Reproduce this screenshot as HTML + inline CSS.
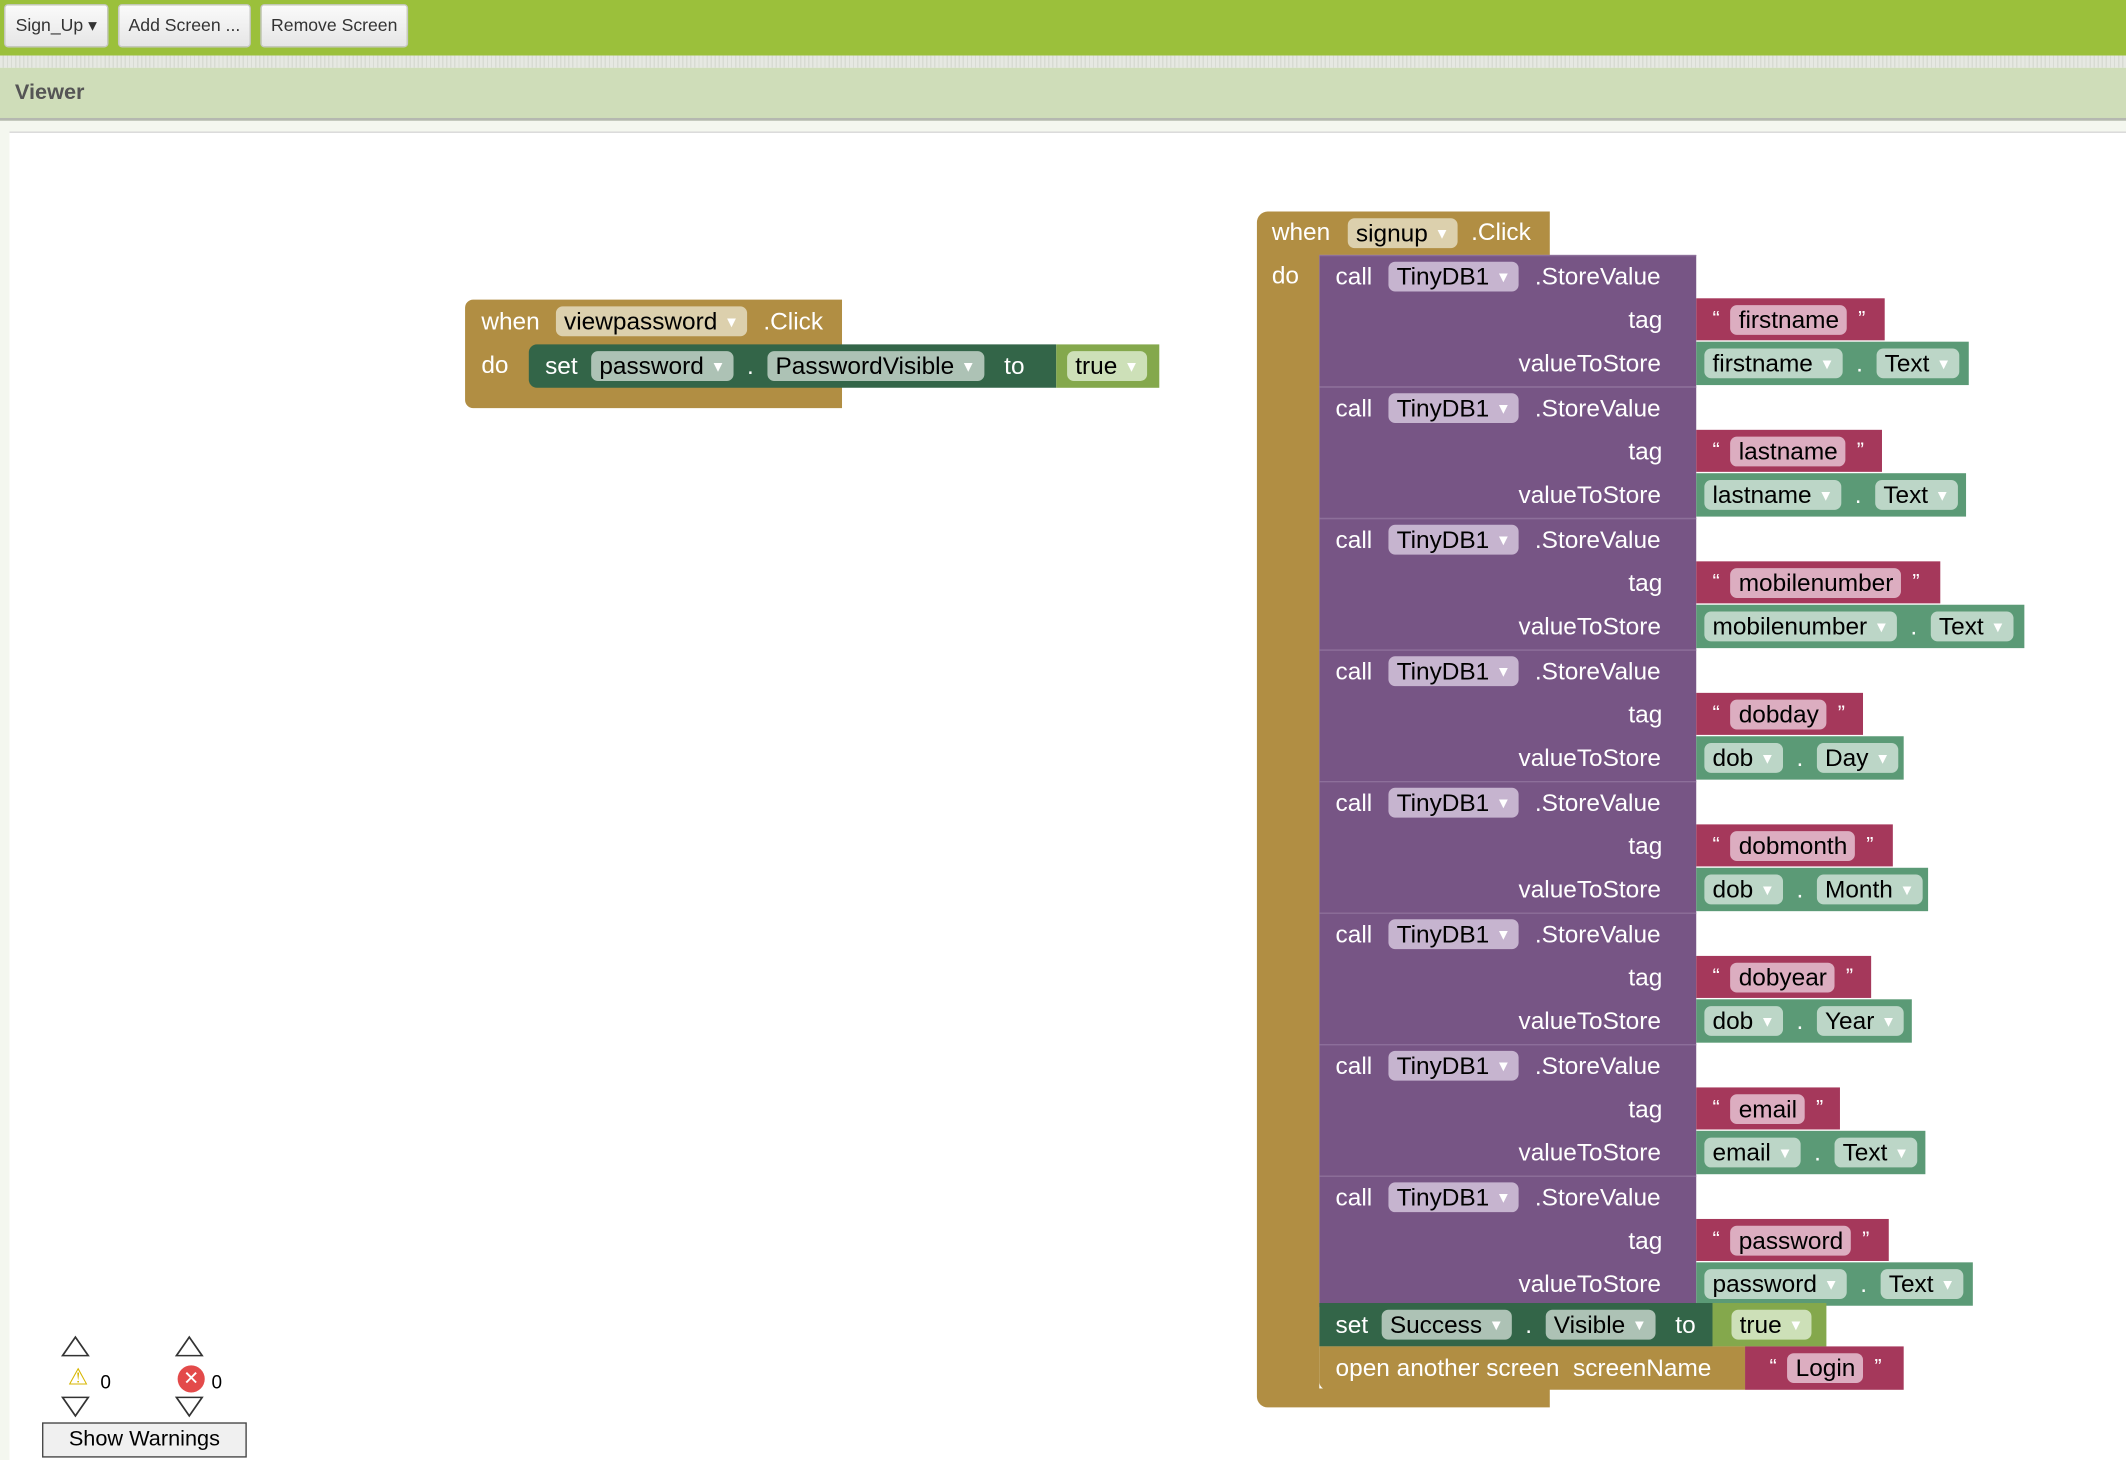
<!DOCTYPE html>
<html><head><meta charset="utf-8">
<style>
html,body{margin:0;padding:0;width:2126px;height:1460px;overflow:hidden;background:#fff;font-family:"Liberation Sans",sans-serif}
#s{position:absolute;left:0;top:0;width:1568px;height:1077px;transform:scale(1.3559);transform-origin:0 0;background:#f4f7ef}
.a{position:absolute;box-sizing:border-box}
.top{left:0;top:0;width:1568px;height:41px;background:#9bc03b}
.btn{top:3px;height:32px;background:linear-gradient(#fafafa,#e6e6e6);border:1px solid #c8c8c8;border-radius:3px;font-size:13px;color:#333;line-height:30px;text-align:center}
.stripe{left:0;top:41px;width:1568px;height:9px;background:repeating-linear-gradient(90deg,#e6e8e2 0 2px,#d8dbd3 2px 3px)}
.viewer{left:0;top:50px;width:1568px;height:39px;background:#cfddb9;border-bottom:2px solid #b5b8b0;font-size:16px;font-weight:bold;color:#555;padding:10px 11px}
.canvas{left:7px;top:97px;width:1561px;height:980px;background:#fff;border-top:1px solid #d6d6d6}
.b{position:absolute;box-sizing:border-box;color:#fff;font-size:18px;display:flex;align-items:center;white-space:nowrap}
.gold{background:#b18e43}
.pur{background:#775585}
.red{background:#a5385b}
.grn{background:#5b9a76}
.dgn{background:#336548}
.lgn{background:#84a84c}
.p{display:inline-block;height:22px;line-height:22px;border-radius:5px;padding:0 6px;color:#000;font-size:18px}
.pg{background:#dcd0ad}
.pp{background:#c6b4cf}
.pr{background:#dcadc0}
.pgr{background:#bcd6c7}
.pdg{background:#adc2b5}
.pl{background:#cde0b8}
.dd{font-size:11px;color:#fff;margin-left:5px;vertical-align:2px}
.t{position:absolute;color:#fff;font-size:18px;white-space:nowrap;line-height:20px}
.q{margin:0 8px;font-size:16px}
</style></head><body><div id="s">
<div class="a top"></div>
<div class="a btn" style="left:3px;width:77px">Sign_Up ▾</div>
<div class="a btn" style="left:87px;width:98px">Add Screen ...</div>
<div class="a btn" style="left:192px;width:109px">Remove Screen</div>
<div class="a stripe"></div>
<div class="a viewer">Viewer</div>
<div class="a canvas"></div>

<!-- viewpassword -->
<div class="b gold" style="left:343px;top:221px;width:278px;height:80px;border-radius:6px 0 0 6px"></div>
<div class="t" style="left:355px;top:227px">when</div>
<span class="p pg" style="position:absolute;left:410px;top:226px">viewpassword<span class="dd">▼</span></span>
<div class="t" style="left:563px;top:227px">.Click</div>
<div class="t" style="left:355px;top:259px">do</div>
<div class="b dgn" style="left:390px;top:254px;width:389px;height:32px;padding-left:12px;border-radius:6px 0 0 6px">set&nbsp;&nbsp;<span class="p pdg">password<span class="dd">▼</span></span>&nbsp;&nbsp;.&nbsp;&nbsp;<span class="p pdg">PasswordVisible<span class="dd">▼</span></span>&nbsp;&nbsp;&nbsp;to</div>
<div class="b lgn" style="left:779px;top:254px;width:76px;height:32px;padding-left:8px"><span class="p pl">true<span class="dd">▼</span></span></div>

<!-- signup -->
<div class="b gold" style="left:927px;top:156px;width:216px;height:882px;border-radius:8px 0 0 8px"></div>
<div class="t" style="left:938px;top:161px">when</div>
<span class="p pg" style="position:absolute;left:994px;top:161px">signup<span class="dd">▼</span></span>
<div class="t" style="left:1085px;top:161px">.Click</div>
<div class="t" style="left:938px;top:193px">do</div>
<div class="a" style="left:973px;top:188px;width:170px;height:836px;background:#fff"></div>

<div id="rows"></div>

<div class="b dgn" style="left:973px;top:961px;width:290px;height:32px;padding-left:12px">set&nbsp;&nbsp;<span class="p pdg">Success<span class="dd">▼</span></span>&nbsp;&nbsp;.&nbsp;&nbsp;<span class="p pdg">Visible<span class="dd">▼</span></span>&nbsp;&nbsp;&nbsp;to</div>
<div class="b lgn" style="left:1263px;top:961px;width:84px;height:32px;padding-left:14px"><span class="p pl">true<span class="dd">▼</span></span></div>
<div class="b gold" style="left:973px;top:993px;width:314px;height:32px;padding-left:12px;border-radius:0 0 0 6px">open another screen&nbsp;&nbsp;screenName</div>
<div class="b red" style="left:1287px;top:993px;width:117px;height:32px;padding-left:10px"><span class="q">“</span><span class="p pr">Login</span><span class="q">”</span></div>

<!-- warnings -->
<div class="t" style="left:48px;top:982px;color:#333;font-size:20px;transform:scaleX(1.4)">△</div>
<div class="t" style="left:132px;top:982px;color:#333;font-size:20px;transform:scaleX(1.4)">△</div>
<div class="t" style="left:50px;top:1006px;color:#d7b600;font-size:17px">⚠</div>
<div class="t" style="left:74px;top:1009px;color:#000;font-size:14px">0</div>
<div class="a" style="left:131px;top:1007px;width:20px;height:20px;border-radius:50%;background:#e34a4a;color:#fff;font-size:14px;text-align:center;line-height:19px">✕</div>
<div class="t" style="left:156px;top:1009px;color:#000;font-size:14px">0</div>
<div class="t" style="left:48px;top:1027px;color:#333;font-size:20px;transform:scaleX(1.4)">▽</div>
<div class="t" style="left:132px;top:1027px;color:#333;font-size:20px;transform:scaleX(1.4)">▽</div>
<div class="a" style="left:31px;top:1049px;width:151px;height:26px;border:1px solid #444;background:#f0f0f0;font-size:16px;text-align:center;line-height:24px;color:#000">Show Warnings</div>

<script>
var d=[["firstname",1390,"firstname","Text",1452],["lastname",1388,"lastname","Text",1450],["mobilenumber",1431,"mobilenumber","Text",1493],["dobday",1374,"dob","Day",1404],["dobmonth",1396,"dob","Month",1422],["dobyear",1380,"dob","Year",1410],["email",1357,"email","Text",1420],["password",1393,"password","Text",1455]];
var h="";
d.forEach(function(r,i){var T=188+97*i;
h+='<div class="b pur" style="left:973px;top:'+T+'px;width:278px;height:97px;border-top:1px solid #8d6f9a"></div>';
h+='<div class="t" style="left:985px;top:'+(T+6)+'px">call</div>';
h+='<span class="p pp" style="position:absolute;left:1024px;top:'+(T+5)+'px">TinyDB1<span class="dd">▼</span></span>';
h+='<div class="t" style="left:1132px;top:'+(T+6)+'px">.StoreValue</div>';
h+='<div class="t" style="left:1100px;width:126px;text-align:right;top:'+(T+38)+'px">tag</div>';
h+='<div class="t" style="left:1080px;width:145px;text-align:right;top:'+(T+70)+'px">valueToStore</div>';
h+='<div class="b red" style="left:1251px;top:'+(T+32)+'px;width:'+(r[1]-1251)+'px;height:31px;padding-left:4px"><span class="q">“</span><span class="p pr">'+r[0]+'</span><span class="q">”</span></div>';
h+='<div class="b grn" style="left:1251px;top:'+(T+64)+'px;width:'+(r[4]-1251)+'px;height:32px;padding-left:6px"><span class="p pgr">'+r[2]+'<span class="dd">▼</span></span>&nbsp;&nbsp;<span style="color:#fff">.</span>&nbsp;&nbsp;<span class="p pgr">'+r[3]+'<span class="dd">▼</span></span></div>';
});
document.getElementById("rows").outerHTML=h;
</script>
</div></body></html>
